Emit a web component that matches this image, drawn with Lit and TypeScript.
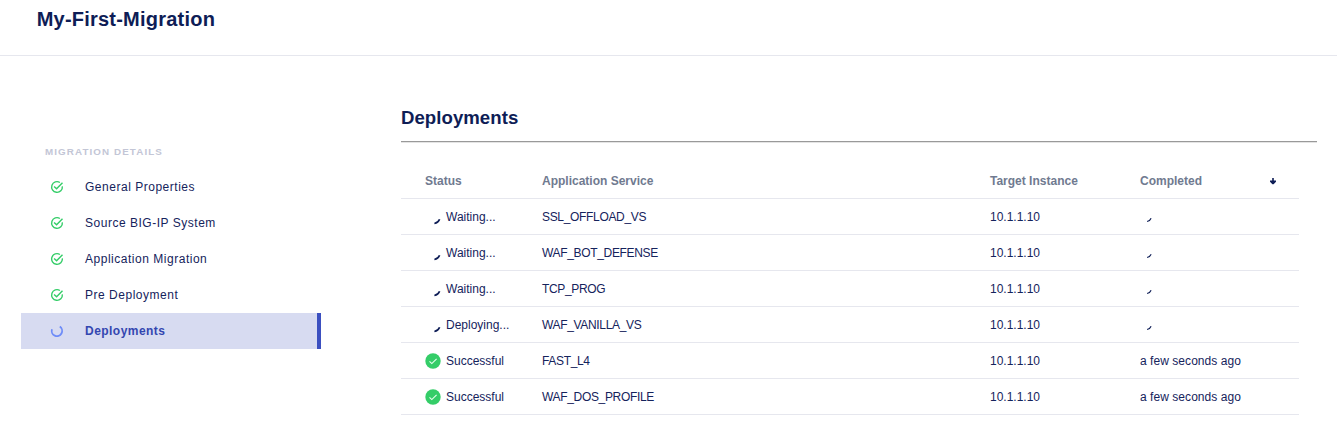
import { LitElement, html, css, svg } from "lit";
import { customElement, property } from "lit/decorators.js";
import { classMap } from "lit/directives/class-map.js";

interface Step { label: string; active?: boolean; }
interface Deployment { status: string; service: string; target: string; completed?: string; }

const steps: Step[] = [
  { label: "General Properties" },
  { label: "Source BIG-IP System" },
  { label: "Application Migration" },
  { label: "Pre Deployment" },
  { label: "Deployments", active: true },
];

const deployments: Deployment[] = [
  { status: "Waiting...", service: "SSL_OFFLOAD_VS", target: "10.1.1.10" },
  { status: "Waiting...", service: "WAF_BOT_DEFENSE", target: "10.1.1.10" },
  { status: "Waiting...", service: "TCP_PROG", target: "10.1.1.10" },
  { status: "Deploying...", service: "WAF_VANILLA_VS", target: "10.1.1.10" },
  { status: "Successful", service: "FAST_L4", target: "10.1.1.10", completed: "a few seconds ago" },
  { status: "Successful", service: "WAF_DOS_PROFILE", target: "10.1.1.10", completed: "a few seconds ago" },
];

@customElement("status-icon")
class StatusIcon extends LitElement {
  @property() kind = "check";

  static styles = css`
    :host { display: block; width: 16px; height: 16px; flex: none; }
    svg { display: block; }
  `;

  private shape() {
    switch (this.kind) {
      case "check":
        return svg`<g fill="none" stroke="#34cd68" stroke-width="1.4">
          <path d="M13.3 7.3A5.35 5.35 0 1 1 10.9 3.5"/>
          <path d="M5.1 7.4L7.6 9.8L13.5 3.7"/></g>`;
      case "ring":
        return svg`<path d="M10.8 3.6A5.2 5.2 0 1 1 3 6.2" fill="none" stroke="#6e8cf8" stroke-width="1.8"/>`;
      case "success":
        return svg`<circle cx="8" cy="8" r="7.7" fill="#34cd68"/>
          <path d="M4.5 8.4L6.8 10.6L11.6 5.8" fill="none" stroke="#e6ffee" stroke-width="1.1"/>`;
      case "busy":
        return svg`<path d="M14.6 10.2Q13.2 13.7 9.4 14.5" fill="none" stroke="#0e1d56" stroke-width="1.7"/>`;
      default:
        return svg`<path d="M11.1 9.2Q10 11.9 7.1 12.5" fill="none" stroke="#0e1d56" stroke-width="1.2"/>`;
    }
  }

  render() {
    return html`<svg width="16" height="16" viewBox="0 0 16 16" aria-hidden="true">${this.shape()}</svg>`;
  }
}

@customElement("app-root")
class AppRoot extends LitElement {
  static styles = css`
    :host {
      display: block;
      height: 446px;
      overflow: hidden;
      background: #fff;
      color: #15235c;
      font: 12px/16px "Liberation Sans", Arial, sans-serif;
    }
    .top { box-sizing: border-box; height: 56px; padding: 7px 36px; border-bottom: 1px solid #e6e7ee; }
    h1, h2, h3 { margin: 0; }
    h1, h2 { color: #0e1d56; }
    h1 { font-size: 20px; line-height: 24px; letter-spacing: 0.22px; padding-left: 0.7px; }
    .body { display: grid; grid-template-columns: 300px 916px; column-gap: 80px; padding-left: 21px; }
    nav { padding-top: 88px; }
    h3 { padding-left: 24px; height: 25px; font-size: 9.8px; color: #c3c6d6; letter-spacing: 1.1px; }
    .step { display: flex; align-items: center; box-sizing: border-box; height: 36px; padding-left: 28px; gap: 20px; letter-spacing: 0.52px; }
    .active { background: #d7dbf1; border-right: 4px solid #3b4fc0; color: #3346b0; font-weight: bold; letter-spacing: 0.46px; }
    main { padding-top: 50px; }
    h2 { height: 35px; font-size: 18.6px; line-height: 24px; letter-spacing: 0.05px; }
    .rule { height: 1px; background: #999; border-bottom: 1px solid #e4e4e4; margin-bottom: 20px; }
    .table { width: 898px; }
    .row {
      display: grid;
      grid-template-columns: 117px 448px 150px 136px;
      align-items: center;
      box-sizing: border-box;
      height: 36px;
      padding-left: 24px;
      border-bottom: 1px solid #e6e7ee;
    }
    .head { color: #707a90; font-weight: bold; }
    .last { display: flex; align-items: center; justify-content: space-between; }
    .status { display: flex; align-items: center; gap: 5px; }
    .service { letter-spacing: -0.33px; }
    .when { letter-spacing: 0.05px; }
    .arrow { display: block; }
  `;

  render() {
    return html`
      <header class="top"><h1>My-First-Migration</h1></header>
      <div class="body">
        <nav>
          <h3>MIGRATION DETAILS</h3>
          ${steps.map((s) => html`
            <div class=${classMap({ step: true, active: !!s.active })}>
              <status-icon kind=${s.active ? "ring" : "check"}></status-icon>
              <span>${s.label}</span>
            </div>`)}
        </nav>
        <main>
          <h2>Deployments</h2>
          <div class="rule"></div>
          <div class="table">
            <div class="row head">
              <span>Status</span><span>Application Service</span><span>Target Instance</span>
              <span class="last">Completed
                <svg class="arrow" width="6" height="8" viewBox="0 0 6 8"><path d="M2.2 1H3.8V3.6H6V4.8L3.6 7.2H2.4L0 4.8V3.6H2.2Z" fill="#0e1d56"/></svg>
              </span>
            </div>
            ${deployments.map((d) => html`
              <div class="row">
                <span class="status"><status-icon kind=${d.completed ? "success" : "busy"}></status-icon>${d.status}</span>
                <span class="service">${d.service}</span>
                <span>${d.target}</span>
                <span class="when">${d.completed ?? html`<status-icon kind="pending"></status-icon>`}</span>
              </div>`)}
          </div>
        </main>
      </div>`;
  }
}
